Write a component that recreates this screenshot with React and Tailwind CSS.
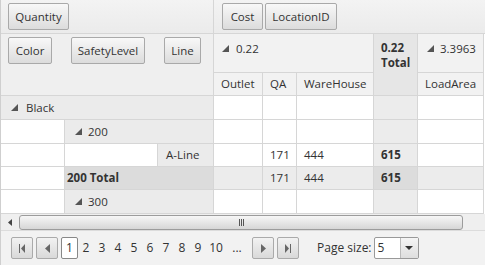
import React from "react";

const Tri = ({ c = "#555" }) => (
  <svg width="7" height="7" viewBox="0 0 7 7" className="shrink-0">
    <polygon points="7,0 7,7 0,7" fill={c} />
  </svg>
);

const Btn = ({ w, children }) => (
  <div
    className="h-[27px] border border-[#a9a9a9] rounded-[2px] bg-gradient-to-b from-[#f8f8f8] to-[#dcdcdc] text-[#333] flex items-center justify-center shrink-0"
    style={{ width: w }}
  >
    {children}
  </div>
);

const B = "border-r border-b border-[#d6d6d6]";

const Row = ({ h, cells }) => (
  <div className="flex" style={{ height: h }}>
    {cells}
  </div>
);

export default function App() {
  const dataCells = (vals, total) => (
    <>
      <div className={`w-[49px] ${B} ${total ? "bg-[#ececec]" : "bg-white"}`} />
      <div className={`w-[34px] ${B} ${total ? "bg-[#ececec]" : "bg-white"} flex items-center pl-[7px]`}>{vals && "171"}</div>
      <div className={`w-[77px] ${B} ${total ? "bg-[#ececec]" : "bg-white"} flex items-center pl-[7px]`}>{vals && "444"}</div>
      <div className={`w-[44px] ${B} ${total ? "bg-[#dcdcdc]" : "bg-[#ececec]"} flex items-center pl-[7px] font-bold`}>{vals && "615"}</div>
      <div className={`w-[66px] ${B} ${total ? "bg-[#ececec]" : "bg-white"}`} />
    </>
  );

  const pbtn =
    "w-[22px] h-[22px] border border-[#aaa] rounded-[2px] bg-gradient-to-b from-[#f2f2f2] to-[#d9d9d9] flex items-center justify-center";

  return (
    <div className="w-[485px] h-[265px] overflow-hidden bg-white text-[#333] font-['Open_Sans',sans-serif] text-[11.5px] leading-none">
      <div className="w-[485px] border-l border-[#cfcfcf]">
        {/* top drop area */}
        <div className="flex h-[34px] border-b border-[#d6d6d6] bg-gradient-to-b from-[#f3f3f3] to-[#ebebeb]">
          <div className="w-[213px] border-r border-[#d6d6d6] pl-[7px] pt-[3px]">
            <Btn w={61}>Quantity</Btn>
          </div>
          <div className="flex pl-[8px] pt-[3px] gap-[2px]">
            <Btn w={41}>Cost</Btn>
            <Btn w={72}>LocationID</Btn>
          </div>
        </div>

        {/* header section */}
        <div className="flex h-[62px]">
          <div className={`w-[213px] ${B} bg-[#efefef] flex items-start pt-[3px] pl-[7px]`}>
            <Btn w={44}>Color</Btn>
            <div className="w-[19px]" />
            <Btn w={74}>SafetyLevel</Btn>
            <div className="w-[19px]" />
            <Btn w={37}>Line</Btn>
          </div>
          <div className="flex flex-col">
            <div className="flex h-[39px]">
              <div className={`w-[160px] ${B} bg-[#f2f2f2] flex items-start pt-[9px] pl-[8px] gap-[7px]`}>
                <div className="pt-[2px]"><Tri /></div>
                <span>0.22</span>
              </div>
            </div>
            <div className="flex h-[23px]">
              <div className={`w-[49px] ${B} bg-[#f2f2f2] flex items-center pl-[7px]`}>Outlet</div>
              <div className={`w-[34px] ${B} bg-[#f2f2f2] flex items-center pl-[7px]`}>QA</div>
              <div className={`w-[77px] ${B} bg-[#f2f2f2] flex items-center pl-[7px]`}>WareHouse</div>
            </div>
          </div>
          <div className={`w-[44px] ${B} bg-[#e6e6e6] pl-[7px] pt-[6px] font-bold leading-[15px]`}>
            0.22
            <br />
            Total
          </div>
          <div className="flex flex-col">
            <div className={`w-[66px] h-[39px] ${B} bg-[#f2f2f2] flex items-start pt-[9px] pl-[9px] gap-[6px]`}>
              <div className="pt-[2px]"><Tri /></div>
              <span>3.3963</span>
            </div>
            <div className={`w-[66px] h-[23px] ${B} bg-[#f2f2f2] flex items-center pl-[7px]`}>LoadArea</div>
          </div>
        </div>

        {/* data rows */}
        <Row
          h={24}
          cells={
            <>
              <div className={`w-[213px] ${B} bg-[#ebebeb] flex items-center pl-[10px] gap-[8px]`}>
                <Tri />
                <span>Black</span>
              </div>
              {dataCells(false, false)}
            </>
          }
        />
        <Row
          h={24}
          cells={
            <>
              <div className={`w-[64px] ${B} bg-white`} />
              <div className={`w-[149px] ${B} bg-[#ebebeb] flex items-center pl-[10px] gap-[6px]`}>
                <Tri />
                <span>200</span>
              </div>
              {dataCells(false, false)}
            </>
          }
        />
        <Row
          h={23}
          cells={
            <>
              <div className={`w-[64px] ${B} bg-white`} />
              <div className={`w-[93px] ${B} bg-white`} />
              <div className={`w-[56px] ${B} bg-[#ebebeb] flex items-center pl-[8px]`}>A-Line</div>
              {dataCells(true, false)}
            </>
          }
        />
        <Row
          h={23}
          cells={
            <>
              <div className={`w-[64px] ${B} bg-white`} />
              <div className={`w-[149px] ${B} bg-[#dcdcdc] flex items-center pl-[2px] font-bold`}>200 Total</div>
              {dataCells(true, true)}
            </>
          }
        />
        <Row
          h={24}
          cells={
            <>
              <div className={`w-[64px] ${B} bg-white`} />
              <div className={`w-[149px] ${B} bg-[#ebebeb] flex items-center pl-[10px] gap-[6px]`}>
                <Tri />
                <span>300</span>
              </div>
              {dataCells(false, false)}
            </>
          }
        />

        {/* scrollbar */}
        <div className="h-[17px] bg-[#efefef] flex items-center border-b border-[#dcdcdc]">
          <div className="w-[18px] flex justify-center">
            <svg width="4" height="7" viewBox="0 0 4 7">
              <polygon points="4,0 4,7 0,3.5" fill="#444" />
            </svg>
          </div>
          <div className="w-[444px] h-[15px] rounded-[3px] border border-[#9c9c9c] bg-gradient-to-b from-[#f7f7f7] to-[#d6d6d6] flex items-center justify-center gap-[1px]">
            <div className="w-[1px] h-[7px] bg-[#555]" />
            <div className="w-[1px] h-[7px] bg-[#555]" />
            <div className="w-[1px] h-[7px] bg-[#555]" />
          </div>
        </div>

        {/* pager */}
        <div className="h-[34px] bg-[#f2f2f2] flex items-center pl-[10px] text-[12px]">
          <div className={pbtn}>
            <svg width="8" height="9" viewBox="0 0 8 9">
              <rect x="1" y="0" width="1" height="9" fill="#666" />
              <polygon points="7,0 7,9 3,4.5" fill="#666" />
            </svg>
          </div>
          <div className="w-[3px]" />
          <div className={pbtn}>
            <svg width="5" height="9" viewBox="0 0 5 9">
              <polygon points="5,0 5,9 0,4.5" fill="#666" />
            </svg>
          </div>
          <div className="w-[3px]" />
          <div className="w-[17px] h-[22px] border border-[#888] rounded-[2px] bg-white flex items-center justify-center">1</div>
          <div className="flex">
            {["2", "3", "4", "5", "6", "7", "8", "9"].map((n) => (
              <div key={n} className="w-[16px] flex justify-center">{n}</div>
            ))}
            <div className="w-[20px] flex justify-center">10</div>
            <div className="w-[22px] flex justify-center">...</div>
          </div>
          <div className="w-[4px]" />
          <div className={pbtn}>
            <svg width="5" height="9" viewBox="0 0 5 9">
              <polygon points="0,0 0,9 5,4.5" fill="#666" />
            </svg>
          </div>
          <div className="w-[3px]" />
          <div className={pbtn}>
            <svg width="8" height="9" viewBox="0 0 8 9">
              <polygon points="1,0 1,9 5,4.5" fill="#666" />
              <rect x="6" y="0" width="1" height="9" fill="#666" />
            </svg>
          </div>
          <div className="w-[18px]" />
          <span>Page size:</span>
          <div className="w-[2px]" />
          <div className="w-[45px] h-[22px] border border-[#999] rounded-[2px] bg-white flex">
            <div className="flex-1 flex items-center pl-[3px] border-r border-[#bbb]">5</div>
            <div className="w-[17px] bg-gradient-to-b from-[#f5f5f5] to-[#dedede] flex items-center justify-center">
              <svg width="8" height="4" viewBox="0 0 8 4">
                <polygon points="0,0 8,0 4,4" fill="#333" />
              </svg>
            </div>
          </div>
        </div>
      </div>
    </div>
  );
}
